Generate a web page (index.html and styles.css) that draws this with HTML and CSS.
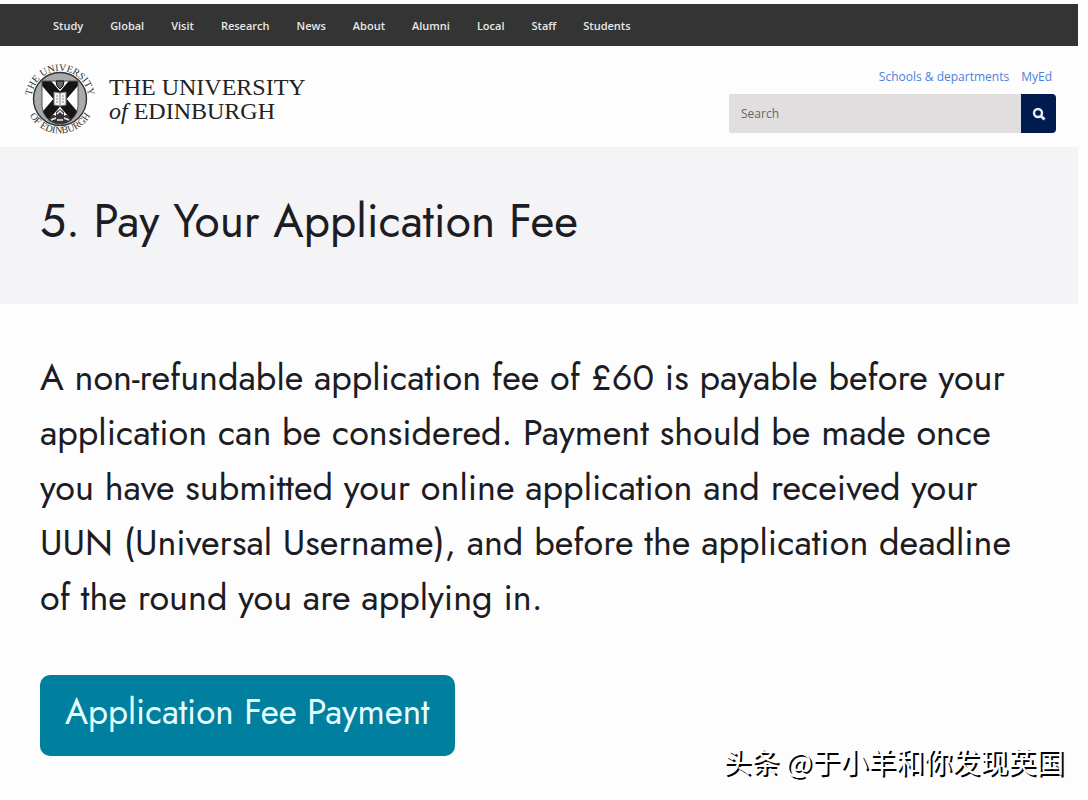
FILE: index.html
```html
<!DOCTYPE html>
<html lang="en">
<head>
  <meta charset="UTF-8">
  <meta name="viewport" content="width=device-width, initial-scale=1.0">
  <title>Pay Your Application Fee | The University of Edinburgh</title>
  <link rel="stylesheet" href="styles.css">
</head>
<body>

  <div class="page">
    <nav class="top-nav">
      <a href="#">Study</a>
      <a href="#">Global</a>
      <a href="#">Visit</a>
      <a href="#">Research</a>
      <a href="#">News</a>
      <a href="#">About</a>
      <a href="#">Alumni</a>
      <a href="#">Local</a>
      <a href="#">Staff</a>
      <a href="#">Students</a>
    </nav>

    <header class="site-header">
      <a href="#" class="logo">
        <svg class="crest" viewBox="0 0 72 72" width="72" height="72" aria-hidden="true">
          <defs>
            <path id="ring-top" d="M10 48 A28.5 28.5 0 1 1 62 48"/>
            <path id="ring-bottom" d="M1.5 36 A34.5 34.5 0 0 0 70.5 36"/>
            <clipPath id="shield"><path d="M18 18 H54 V43 Q54 57 36 62 Q18 57 18 43 Z"/></clipPath>
          </defs>
          <circle cx="36" cy="36" r="26.5" fill="#aaa" stroke="#333" stroke-width="1.4"/>
          <g clip-path="url(#shield)">
            <path d="M18 18 H54 V62 H18 Z" fill="#fff"/>
            <path d="M18 15 L54 57 M54 15 L18 57" stroke="#151515" stroke-width="10"/>
          </g>
          <path d="M18 18 H54 V43 Q54 57 36 62 Q18 57 18 43 Z" fill="none" stroke="#555"/>
          <path d="M32 18 H40 L39 23 L36 26 L33 23 Z" fill="#666" stroke="#111"/>
          <path d="M30 29 L36 30 L42 29 V42 L36 43 L30 42 Z" fill="#f4f4f4" stroke="#777"/>
          <path d="M36 30 V43 M32 33 H34 M32 36 H34 M32 39 H34 M38 33 H40 M38 36 H40 M38 39 H40" stroke="#888"/>
          <path d="M24 57 Q29 50 32 53 V49 L36 46 L40 49 V53 Q43 50 48 57 Q42 61 36 61 Q30 61 24 57 Z" fill="#333"/>
          <path d="M33 51 L36 48 L39 51 M27 57 L32 55 M45 57 L40 55 M33 57 H39" stroke="#eee" stroke-width="1.5" fill="none"/>
          <text class="ring-text"><textPath href="#ring-top" startOffset="50%">THE UNIVERSITY</textPath></text>
          <text class="ring-text"><textPath href="#ring-bottom" startOffset="50%">OF EDINBURGH</textPath></text>
        </svg>
        <span class="wordmark">
          <span>THE UNIVERSITY</span>
          <span><i>of</i> EDINBURGH</span>
        </span>
      </a>

      <div class="tools">
        <div class="quick-links">
          <a href="#">Schools &amp; departments</a>
          <a href="#">MyEd</a>
        </div>
        <form class="search">
          <input type="text" placeholder="Search" aria-label="Search">
          <button type="button" aria-label="Submit search">
            <svg viewBox="0 0 14 14" width="14" height="14" aria-hidden="true">
              <circle cx="6" cy="6" r="4" fill="none" stroke="#e6eef8" stroke-width="2.4"/>
              <path d="M9 9 L12.5 12.5" stroke="#e6eef8" stroke-width="2.8"/>
            </svg>
          </button>
        </form>
      </div>
    </header>

    <div class="title-band">
      <h1>5. Pay Your Application Fee</h1>
    </div>

    <main class="content">
      <p>
        A non-refundable application fee of £60 is payable before your<br>
        application can be considered. Payment should be made once<br>
        you have submitted your online application and received your<br>
        UUN (Universal Username), and before the application deadline<br>
        of the round you are applying in.
      </p>
      <a href="#" class="pay-button">Application Fee Payment</a>
    </main>
  </div>

  <div class="watermark" lang="zh">头条 @于小羊和你发现英国</div>

</body>
</html>
```

FILE: styles.css
```css
* {
  box-sizing: border-box;
}

body {
  margin: 0;
  background: #fdfdfd;
  color: #1c1c24;
  font-family: Jost, Lato, sans-serif;
}

a {
  text-decoration: none;
}

.page {
  margin-right: 10px;
  padding-top: 4px;
}

.top-nav {
  display: flex;
  align-items: center;
  gap: 27px;
  height: 42px;
  padding-left: 53px;
  background: #333433;
}

.top-nav a {
  color: #e8e8e8;
  font: 600 11px "Open Sans", sans-serif;
}

.site-header {
  display: flex;
  justify-content: space-between;
  height: 101px;
  padding: 17px 22px 0 24px;
}

.logo {
  display: flex;
  gap: 13px;
  color: #222;
}

.crest {
  overflow: visible;
}

.ring-text {
  font: 10px "Liberation Serif", serif;
  fill: #333;
  text-anchor: middle;
}

.wordmark {
  display: flex;
  flex-direction: column;
  padding-top: 12px;
  font: 24px/24px "Liberation Serif", serif;
}

.tools {
  width: 327px;
  padding-top: 6px;
}

.quick-links {
  display: flex;
  justify-content: flex-end;
  gap: 12px;
  padding-right: 4px;
  margin-bottom: 9px;
}

.quick-links a {
  color: #4a80e0;
  font: 12px/16px "Open Sans", sans-serif;
}

.search {
  display: flex;
  height: 39px;
}

.search input {
  flex: 1;
  min-width: 0;
  padding: 0 12px;
  border: none;
  border-radius: 2px 0 0 2px;
  background: #e0dede;
  font: 12px "Open Sans", sans-serif;
}

.search input::placeholder {
  color: #666;
}

.search button {
  display: flex;
  align-items: center;
  justify-content: center;
  width: 35px;
  padding: 0;
  border: none;
  border-radius: 0 4px 4px 0;
  background: #001b4d;
}

.title-band {
  padding: 44px 40px 53px;
  background: #f4f3f6;
}

h1 {
  margin: 0;
  font-size: 46px;
  line-height: 60px;
  font-weight: 400;
}

.content {
  padding: 46px 40px;
}

.content p {
  margin: 0 0 50px;
  font-size: 36px;
  line-height: 55px;
}

.pay-button {
  display: inline-block;
  padding: 13px 25px 20px;
  border-radius: 10px;
  background: #007f9f;
  color: #e6fdff;
  font-size: 35px;
  line-height: 48px;
}

.watermark {
  position: absolute;
  right: 24px;
  bottom: 19px;
  color: #fff;
  font: 28px/40px "Noto Sans CJK SC", sans-serif;
  text-shadow: 2px 2px 0 #000;
}
```
